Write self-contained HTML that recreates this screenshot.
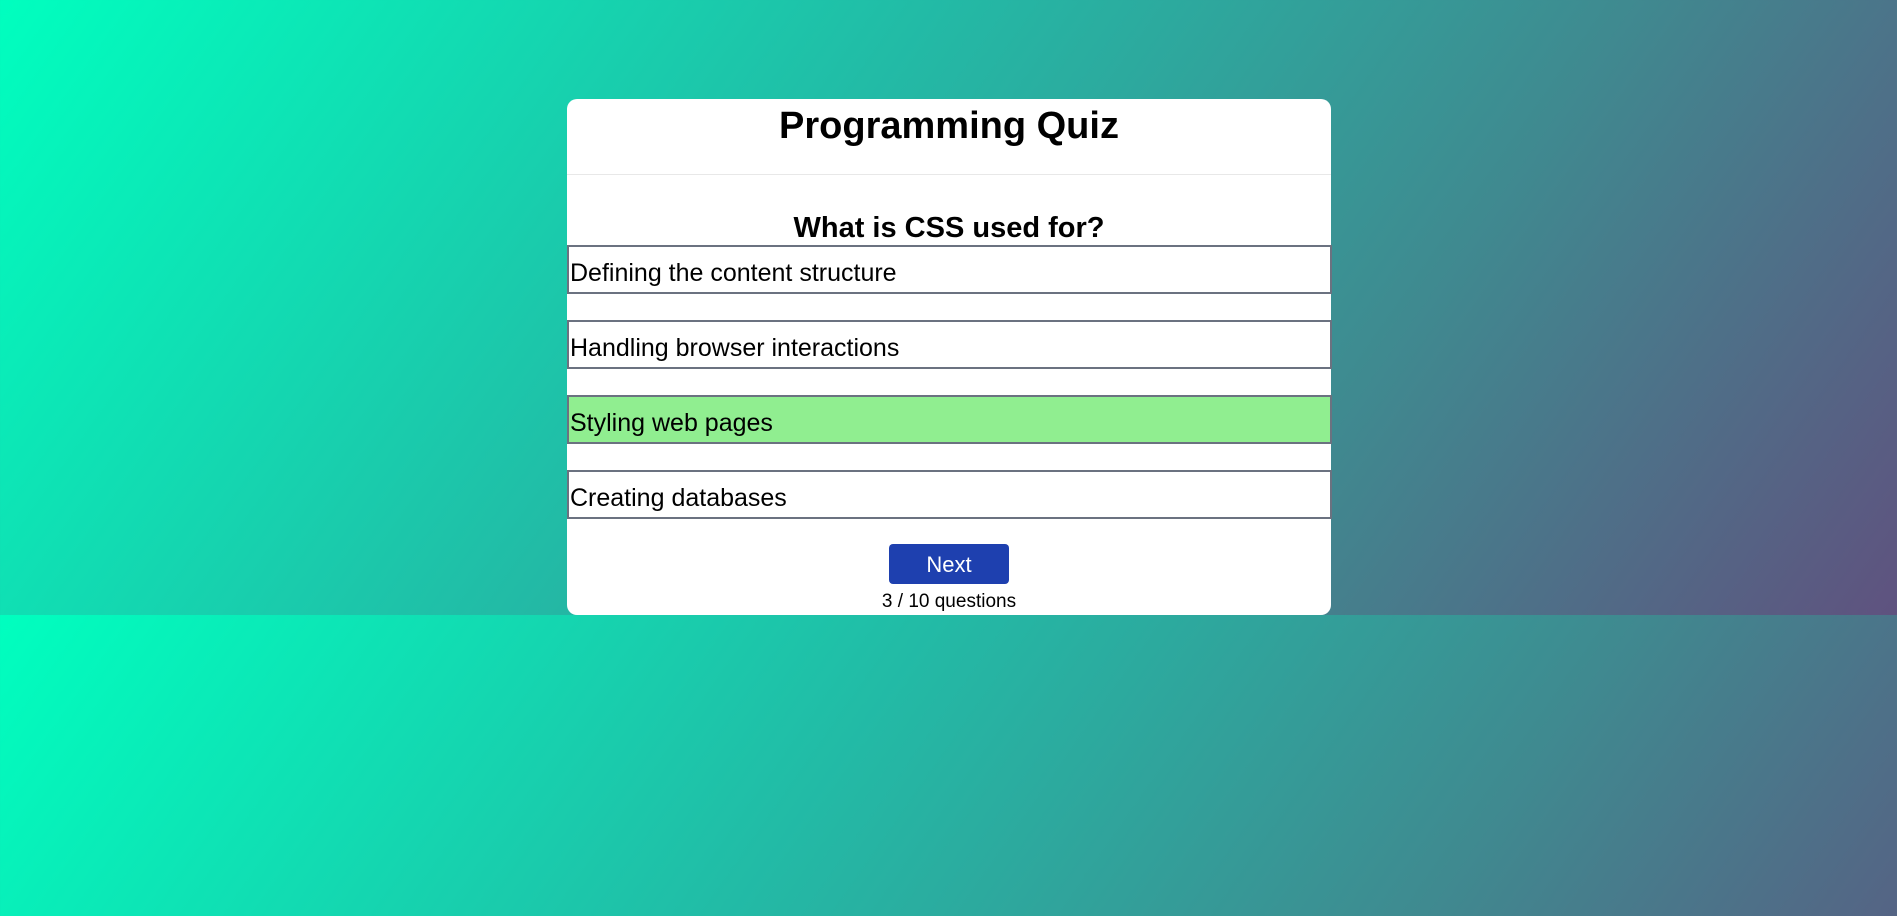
<!DOCTYPE html>
<html><head><style>
html,body{margin:0;padding:0;}
body{width:1897px;height:916px;overflow:hidden;font-family:"Liberation Sans",sans-serif;
background:linear-gradient(125deg,#00ffbf 0%,#22bba6 40%,#3f8a90 70%,#5f527f 100%);background-size:1897px 615px;background-repeat:repeat-y;position:relative;}
.card{position:absolute;left:567px;top:99px;width:764px;height:516px;background:#fff;border-radius:10px;}
.title{position:absolute;top:0;left:0;width:764px;text-align:center;font-size:38px;font-weight:bold;line-height:54px;}
.hr{position:absolute;top:75px;left:0;width:764px;height:1px;background:#e8e8e8;}
.q{position:absolute;top:109px;width:764px;text-align:center;font-size:29px;font-weight:bold;line-height:40px;}
.opt{position:absolute;left:0;width:760px;height:45px;border:2px solid #6b7280;font-size:25px;line-height:52px;padding-left:1px;box-sizing:content-box;overflow:hidden;}
.btn{position:absolute;left:322px;top:445px;width:120px;height:40px;background:#1e40af;border-radius:4px;color:#fff;font-size:22px;text-align:center;line-height:42px;}
.cnt{position:absolute;top:491px;width:764px;text-align:center;font-size:19px;line-height:24px;}
</style></head><body>
<div class="card">
<div class="title">Programming Quiz</div>
<div class="hr"></div>
<div class="q">What is CSS used for?</div>
<div class="opt" style="top:146px">Defining the content structure</div>
<div class="opt" style="top:221px">Handling browser interactions</div>
<div class="opt" style="top:296px;background:#90ee90">Styling web pages</div>
<div class="opt" style="top:371px">Creating databases</div>
<div class="btn">Next</div>
<div class="cnt">3 / 10 questions</div>
</div>
</body></html>
